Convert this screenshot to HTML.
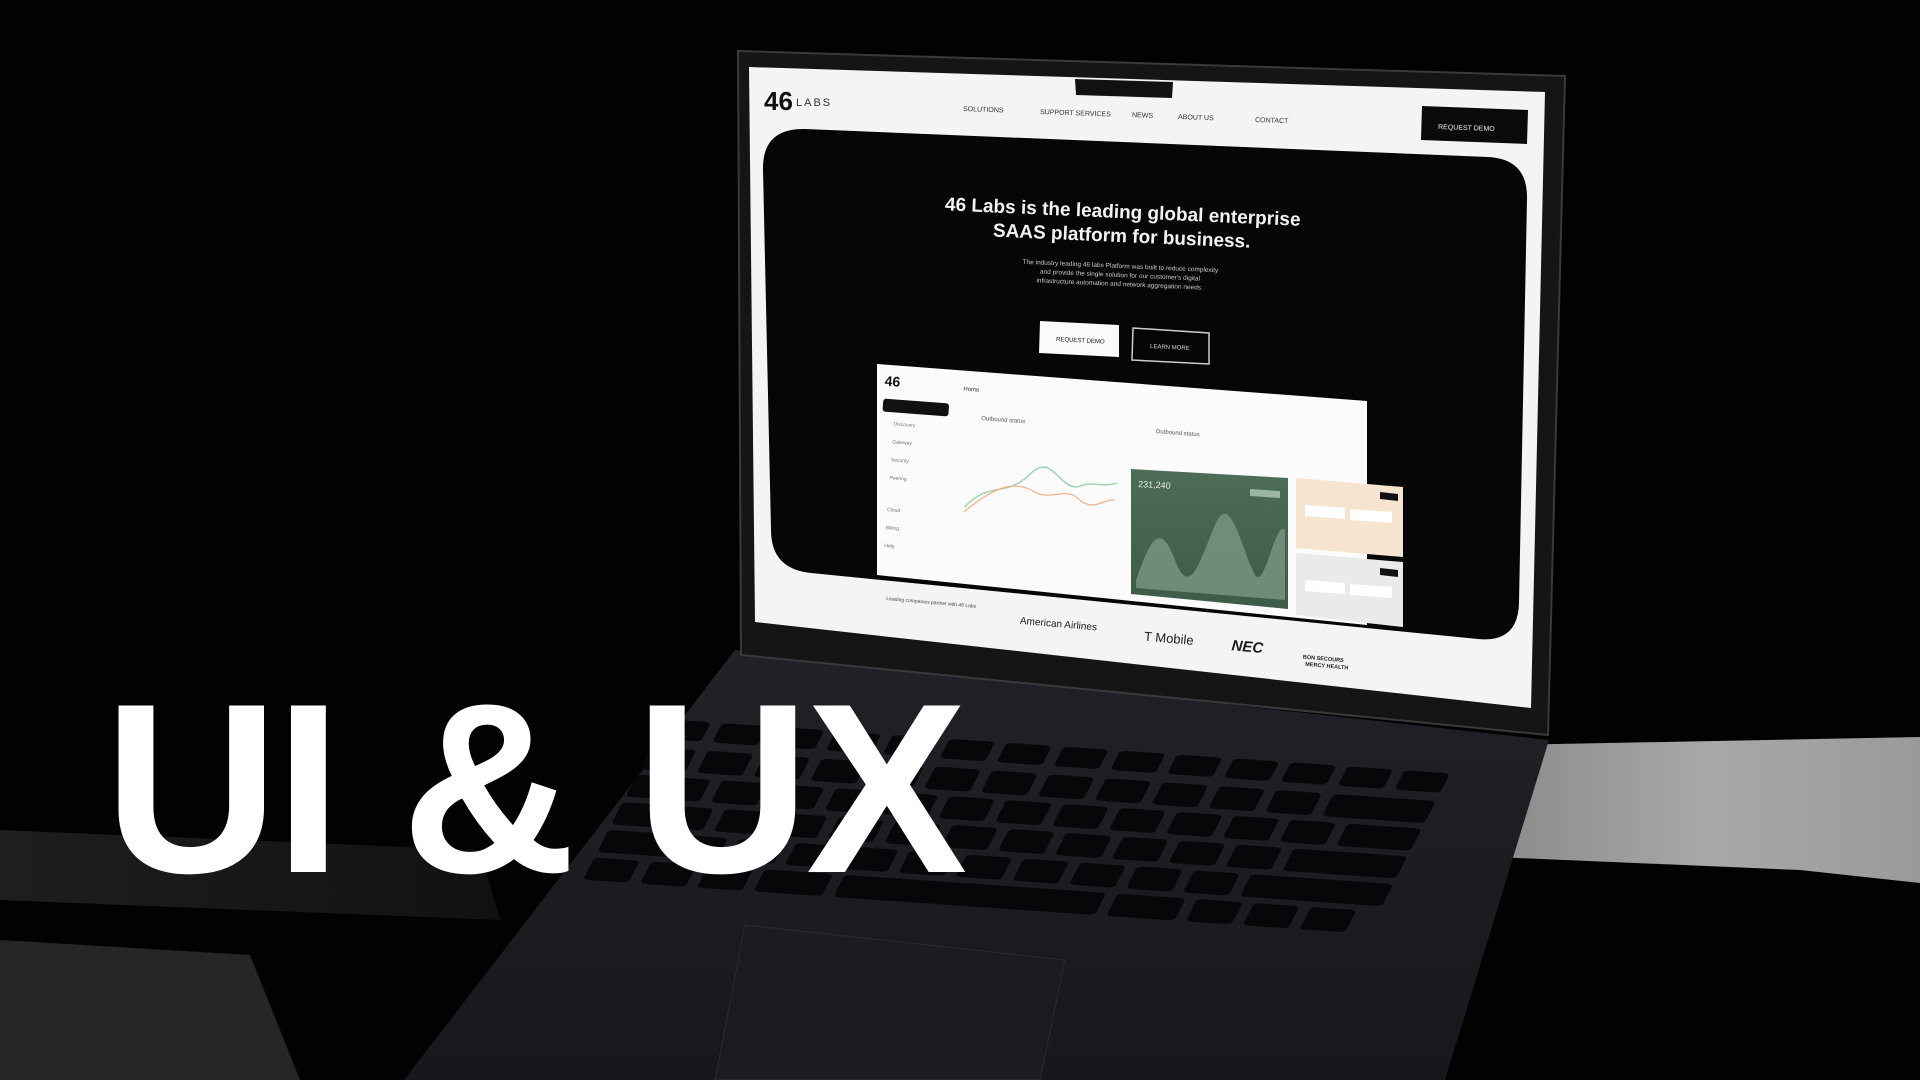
<!DOCTYPE html>
<html><head><meta charset="utf-8"><style>
html,body{margin:0;padding:0;background:#000;width:1920px;height:1080px;overflow:hidden}
svg{display:block}
text{font-family:"Liberation Sans",sans-serif}
</style></head><body>
<svg width="1920" height="1080" viewBox="0 0 1920 1080" xmlns="http://www.w3.org/2000/svg">
<defs>
<linearGradient id="fur" x1="0" y1="0" x2="1" y2="0">
<stop offset="0" stop-color="#8a8a8a"/><stop offset="0.5" stop-color="#a8a8a8"/><stop offset="1" stop-color="#9a9a9a"/>
</linearGradient>
<linearGradient id="deck" x1="0" y1="0" x2="0" y2="1">
<stop offset="0" stop-color="#202228"/><stop offset="1" stop-color="#17181c"/>
</linearGradient>
<linearGradient id="grn" x1="0" y1="0" x2="0" y2="1">
<stop offset="0" stop-color="#4d6d58"/><stop offset="1" stop-color="#3e5a48"/>
</linearGradient>
<linearGradient id="band" x1="0" y1="0" x2="1" y2="0">
<stop offset="0" stop-color="#1e1e1e"/><stop offset="1" stop-color="#111"/>
</linearGradient>
</defs>
<rect width="1920" height="1080" fill="#020202"/>
<!-- dim surfaces left -->
<polygon points="0,830 480,850 500,920 0,900" fill="url(#band)"/>
<polygon points="0,940 250,955 300,1080 0,1080" fill="#262626"/>
<!-- fur right -->
<polygon points="1506,745 1920,737 1920,883 1800,870 1494,857" fill="url(#fur)"/>
<!-- deck -->
<polygon points="735,650 1549,740 1445,1080 404,1080" fill="url(#deck)"/>
<!-- trackpad -->
<polygon points="745,925 1065,960 1040,1080 715,1080" fill="#1b1c21" stroke="#2a2b30" stroke-width="1"/>
<!-- keys -->
<g transform="matrix(56.86,3.93,-14.17,27.67,661,716)">
<g fill="#070709">
<rect x="0.1" y="0.1" width="0.8" height="0.7" rx="0.1"/><rect x="1.1" y="0.1" width="0.8" height="0.7" rx="0.1"/><rect x="2.1" y="0.1" width="0.8" height="0.7" rx="0.1"/><rect x="3.1" y="0.1" width="0.8" height="0.7" rx="0.1"/><rect x="4.1" y="0.1" width="0.8" height="0.7" rx="0.1"/><rect x="5.1" y="0.1" width="0.8" height="0.7" rx="0.1"/><rect x="6.1" y="0.1" width="0.8" height="0.7" rx="0.1"/><rect x="7.1" y="0.1" width="0.8" height="0.7" rx="0.1"/><rect x="8.1" y="0.1" width="0.8" height="0.7" rx="0.1"/><rect x="9.1" y="0.1" width="0.8" height="0.7" rx="0.1"/><rect x="10.1" y="0.1" width="0.8" height="0.7" rx="0.1"/><rect x="11.1" y="0.1" width="0.8" height="0.7" rx="0.1"/><rect x="12.1" y="0.1" width="0.8" height="0.7" rx="0.1"/><rect x="13.1" y="0.1" width="0.8" height="0.7" rx="0.1"/>
<rect x="0.1" y="1.1" width="0.8" height="0.8" rx="0.1"/><rect x="1.1" y="1.1" width="0.8" height="0.8" rx="0.1"/><rect x="2.1" y="1.1" width="0.8" height="0.8" rx="0.1"/><rect x="3.1" y="1.1" width="0.8" height="0.8" rx="0.1"/><rect x="4.1" y="1.1" width="0.8" height="0.8" rx="0.1"/><rect x="5.1" y="1.1" width="0.8" height="0.8" rx="0.1"/><rect x="6.1" y="1.1" width="0.8" height="0.8" rx="0.1"/><rect x="7.1" y="1.1" width="0.8" height="0.8" rx="0.1"/><rect x="8.1" y="1.1" width="0.8" height="0.8" rx="0.1"/><rect x="9.1" y="1.1" width="0.8" height="0.8" rx="0.1"/><rect x="10.1" y="1.1" width="0.8" height="0.8" rx="0.1"/><rect x="11.1" y="1.1" width="0.8" height="0.8" rx="0.1"/><rect x="12.1" y="1.1" width="1.8" height="0.8" rx="0.1"/>
<rect x="0.1" y="2.1" width="1.3" height="0.8" rx="0.1"/><rect x="1.6" y="2.1" width="0.8" height="0.8" rx="0.1"/><rect x="2.6" y="2.1" width="0.8" height="0.8" rx="0.1"/><rect x="3.6" y="2.1" width="0.8" height="0.8" rx="0.1"/><rect x="4.6" y="2.1" width="0.8" height="0.8" rx="0.1"/><rect x="5.6" y="2.1" width="0.8" height="0.8" rx="0.1"/><rect x="6.6" y="2.1" width="0.8" height="0.8" rx="0.1"/><rect x="7.6" y="2.1" width="0.8" height="0.8" rx="0.1"/><rect x="8.6" y="2.1" width="0.8" height="0.8" rx="0.1"/><rect x="9.6" y="2.1" width="0.8" height="0.8" rx="0.1"/><rect x="10.6" y="2.1" width="0.8" height="0.8" rx="0.1"/><rect x="11.6" y="2.1" width="0.8" height="0.8" rx="0.1"/><rect x="12.6" y="2.1" width="1.3" height="0.8" rx="0.1"/>
<rect x="0.1" y="3.1" width="1.6" height="0.8" rx="0.1"/><rect x="1.9" y="3.1" width="0.8" height="0.8" rx="0.1"/><rect x="2.9" y="3.1" width="0.8" height="0.8" rx="0.1"/><rect x="3.9" y="3.1" width="0.8" height="0.8" rx="0.1"/><rect x="4.9" y="3.1" width="0.8" height="0.8" rx="0.1"/><rect x="5.9" y="3.1" width="0.8" height="0.8" rx="0.1"/><rect x="6.9" y="3.1" width="0.8" height="0.8" rx="0.1"/><rect x="7.9" y="3.1" width="0.8" height="0.8" rx="0.1"/><rect x="8.9" y="3.1" width="0.8" height="0.8" rx="0.1"/><rect x="9.9" y="3.1" width="0.8" height="0.8" rx="0.1"/><rect x="10.9" y="3.1" width="0.8" height="0.8" rx="0.1"/><rect x="11.9" y="3.1" width="2" height="0.8" rx="0.1"/>
<rect x="0.1" y="4.1" width="2.1" height="0.8" rx="0.1"/><rect x="2.4" y="4.1" width="0.8" height="0.8" rx="0.1"/><rect x="3.4" y="4.1" width="0.8" height="0.8" rx="0.1"/><rect x="4.4" y="4.1" width="0.8" height="0.8" rx="0.1"/><rect x="5.4" y="4.1" width="0.8" height="0.8" rx="0.1"/><rect x="6.4" y="4.1" width="0.8" height="0.8" rx="0.1"/><rect x="7.4" y="4.1" width="0.8" height="0.8" rx="0.1"/><rect x="8.4" y="4.1" width="0.8" height="0.8" rx="0.1"/><rect x="9.4" y="4.1" width="0.8" height="0.8" rx="0.1"/><rect x="10.4" y="4.1" width="0.8" height="0.8" rx="0.1"/><rect x="11.4" y="4.1" width="2.5" height="0.8" rx="0.1"/>
<rect x="0.1" y="5.1" width="0.8" height="0.8" rx="0.1"/><rect x="1.1" y="5.1" width="0.8" height="0.8" rx="0.1"/><rect x="2.1" y="5.1" width="0.8" height="0.8" rx="0.1"/><rect x="3.1" y="5.1" width="1.2" height="0.8" rx="0.1"/><rect x="4.5" y="5.1" width="4.6" height="0.8" rx="0.1"/><rect x="9.3" y="5.1" width="1.2" height="0.8" rx="0.1"/><rect x="10.7" y="5.1" width="0.8" height="0.8" rx="0.1"/><rect x="11.7" y="5.1" width="0.8" height="0.8" rx="0.1"/><rect x="12.7" y="5.1" width="0.8" height="0.8" rx="0.1"/>
</g></g>
<!-- screen bezel -->
<polygon points="738,51 1565,76 1548,735 741,655" fill="#151515" stroke="#3a3a3a" stroke-width="2"/>
<!-- white screen -->
<polygon points="749,67 1545,92 1531,708 755,622" fill="#f4f4f2"/>
<!-- notch -->
<polygon points="1075,79 1173,82 1172,98 1076,95" fill="#111"/>
<!-- hero black -->
<path d="M805,129 L1488,157 Q1528,159 1527,199 L1519,603 Q1518,643 1478,639 L811,573 Q771,569 771,530 L763,170 Q762,128 805,129 Z" fill="#060606"/>
<!-- nav -->
<text x="764" y="110" font-size="26" font-weight="bold" fill="#111">46</text>
<text x="796" y="106" font-size="11" fill="#333" letter-spacing="2">LABS</text>
<g fill="#333" font-size="7">
<text x="963" y="111" transform="rotate(2 963 111)">SOLUTIONS</text>
<text x="1040" y="114" transform="rotate(2 1040 114)">SUPPORT SERVICES</text>
<text x="1132" y="117" transform="rotate(2 1132 117)">NEWS</text>
<text x="1178" y="119" transform="rotate(2 1178 119)">ABOUT US</text>
<text x="1255" y="122" transform="rotate(2 1255 122)">CONTACT</text>
</g>
<polygon points="1422,106 1528,110 1527,144 1421,140" fill="#0a0a0a"/>
<text x="1438" y="129" font-size="7" fill="#eee" transform="rotate(2 1438 129)">REQUEST DEMO</text>
<!-- hero text -->
<g transform="rotate(2.5 1120 230)" fill="#f2f2f2" text-anchor="middle">
<text x="1122" y="218" font-size="19" font-weight="bold">46 Labs is the leading global enterprise</text>
<text x="1122" y="242" font-size="19" font-weight="bold">SAAS platform for business.</text>
<text x="1122" y="268" font-size="6.5" fill="#ccc">The industry leading 46 labs Platform was built to reduce complexity</text>
<text x="1122" y="277" font-size="6.5" fill="#ccc">and provide the single solution for our customer's digital</text>
<text x="1122" y="286" font-size="6.5" fill="#ccc">infrastructure automation and network aggregation needs.</text>
</g>
<polygon points="1040,321 1119,325 1119,357 1039,353" fill="#fafafa"/>
<text x="1056" y="341" font-size="6" fill="#111" transform="rotate(3 1056 341)">REQUEST DEMO</text>
<polygon points="1133,328 1209,333 1209,364 1132,360" fill="#050505" stroke="#ccc" stroke-width="1.5"/>
<text x="1150" y="348" font-size="6" fill="#ddd" transform="rotate(3 1150 348)">LEARN MORE</text>
<!-- dashboard card -->
<polygon points="877,364 1367,401 1367,625 877,575" fill="#fbfbfb"/>
<g transform="rotate(4.3 877 364)">
<text x="886" y="385" font-size="14" font-weight="bold" fill="#111">46</text>
<text x="965" y="384" font-size="6" fill="#333">Home</text>
<rect x="886" y="398" width="66" height="13" rx="3" fill="#111"/>
<g fill="#777" font-size="5"><text x="898" y="424">Discovery</text><text x="898" y="442">Gateway</text><text x="898" y="460">Security</text><text x="898" y="478">Peering</text><text x="898" y="510">Cloud</text><text x="898" y="528">Billing</text><text x="898" y="546">Help</text></g>
<text x="985" y="412" font-size="6" fill="#555">Outbound status</text>
<text x="1160" y="412" font-size="6" fill="#555">Outbound status</text>
<path d="M975,500 C1000,470 1015,490 1040,460 C1060,440 1070,480 1090,470 C1100,465 1110,470 1125,465" fill="none" stroke="#9fd4b0" stroke-width="1.5"/>
<path d="M975,505 C1000,480 1020,470 1040,478 C1060,490 1075,470 1090,485 C1105,495 1115,480 1125,482" fill="none" stroke="#f0b48a" stroke-width="1.3"/>
</g>
<!-- green card -->
<polygon points="1131,469 1288,478 1288,609 1131,594" fill="url(#grn)"/>
<path d="M1136,580 C1150,540 1160,520 1175,560 C1190,600 1200,560 1215,525 C1230,490 1240,545 1255,575 C1265,590 1275,520 1285,530 L1285,600 L1136,588 Z" fill="#7c9684" opacity="0.8"/>
<text x="1138" y="487" font-size="9" fill="#e8efe9" transform="rotate(3 1138 487)">231,240</text>
<polygon points="1250,489 1280,491 1280,498 1250,496" fill="#9db5a3"/>
<!-- orange card -->
<polygon points="1296,478 1403,487 1403,557 1296,548" fill="#f5e4d0"/>
<polygon points="1380,492 1398,494 1398,501 1380,499" fill="#111"/>
<polygon points="1305,505 1345,508 1345,519 1305,516" fill="#fff"/>
<polygon points="1350,509 1392,512 1392,523 1350,520" fill="#fff"/>
<!-- gray card -->
<polygon points="1296,553 1403,562 1403,627 1296,615" fill="#e8ebe7"/>
<polygon points="1380,568 1398,570 1398,577 1380,575" fill="#111"/>
<polygon points="1305,580 1345,583 1345,594 1305,591" fill="#fff"/>
<polygon points="1350,584 1392,587 1392,598 1350,595" fill="#fff"/>
<!-- logos row -->
<g transform="rotate(5 1000 620)" fill="#1a1a1a">
<text x="885" y="610" font-size="5" fill="#444">Leading companies partner with 46 Labs</text>
<text x="1020" y="622" font-size="10">American Airlines</text>
<text x="1145" y="628" font-size="13" font-family="Liberation Serif">T Mobile</text>
<text x="1233" y="630" font-size="15" font-weight="bold" font-style="italic">NEC</text>
<text x="1305" y="632" font-size="5.5" font-weight="bold">BON SECOURS</text>
<text x="1308" y="639" font-size="5.5" font-weight="bold">MERCY HEALTH</text>
</g>
<!-- big title -->
<text x="104" y="872" font-size="242" font-weight="bold" fill="#ffffff" letter-spacing="-4">UI &amp; UX</text>
</svg>
</body></html>
